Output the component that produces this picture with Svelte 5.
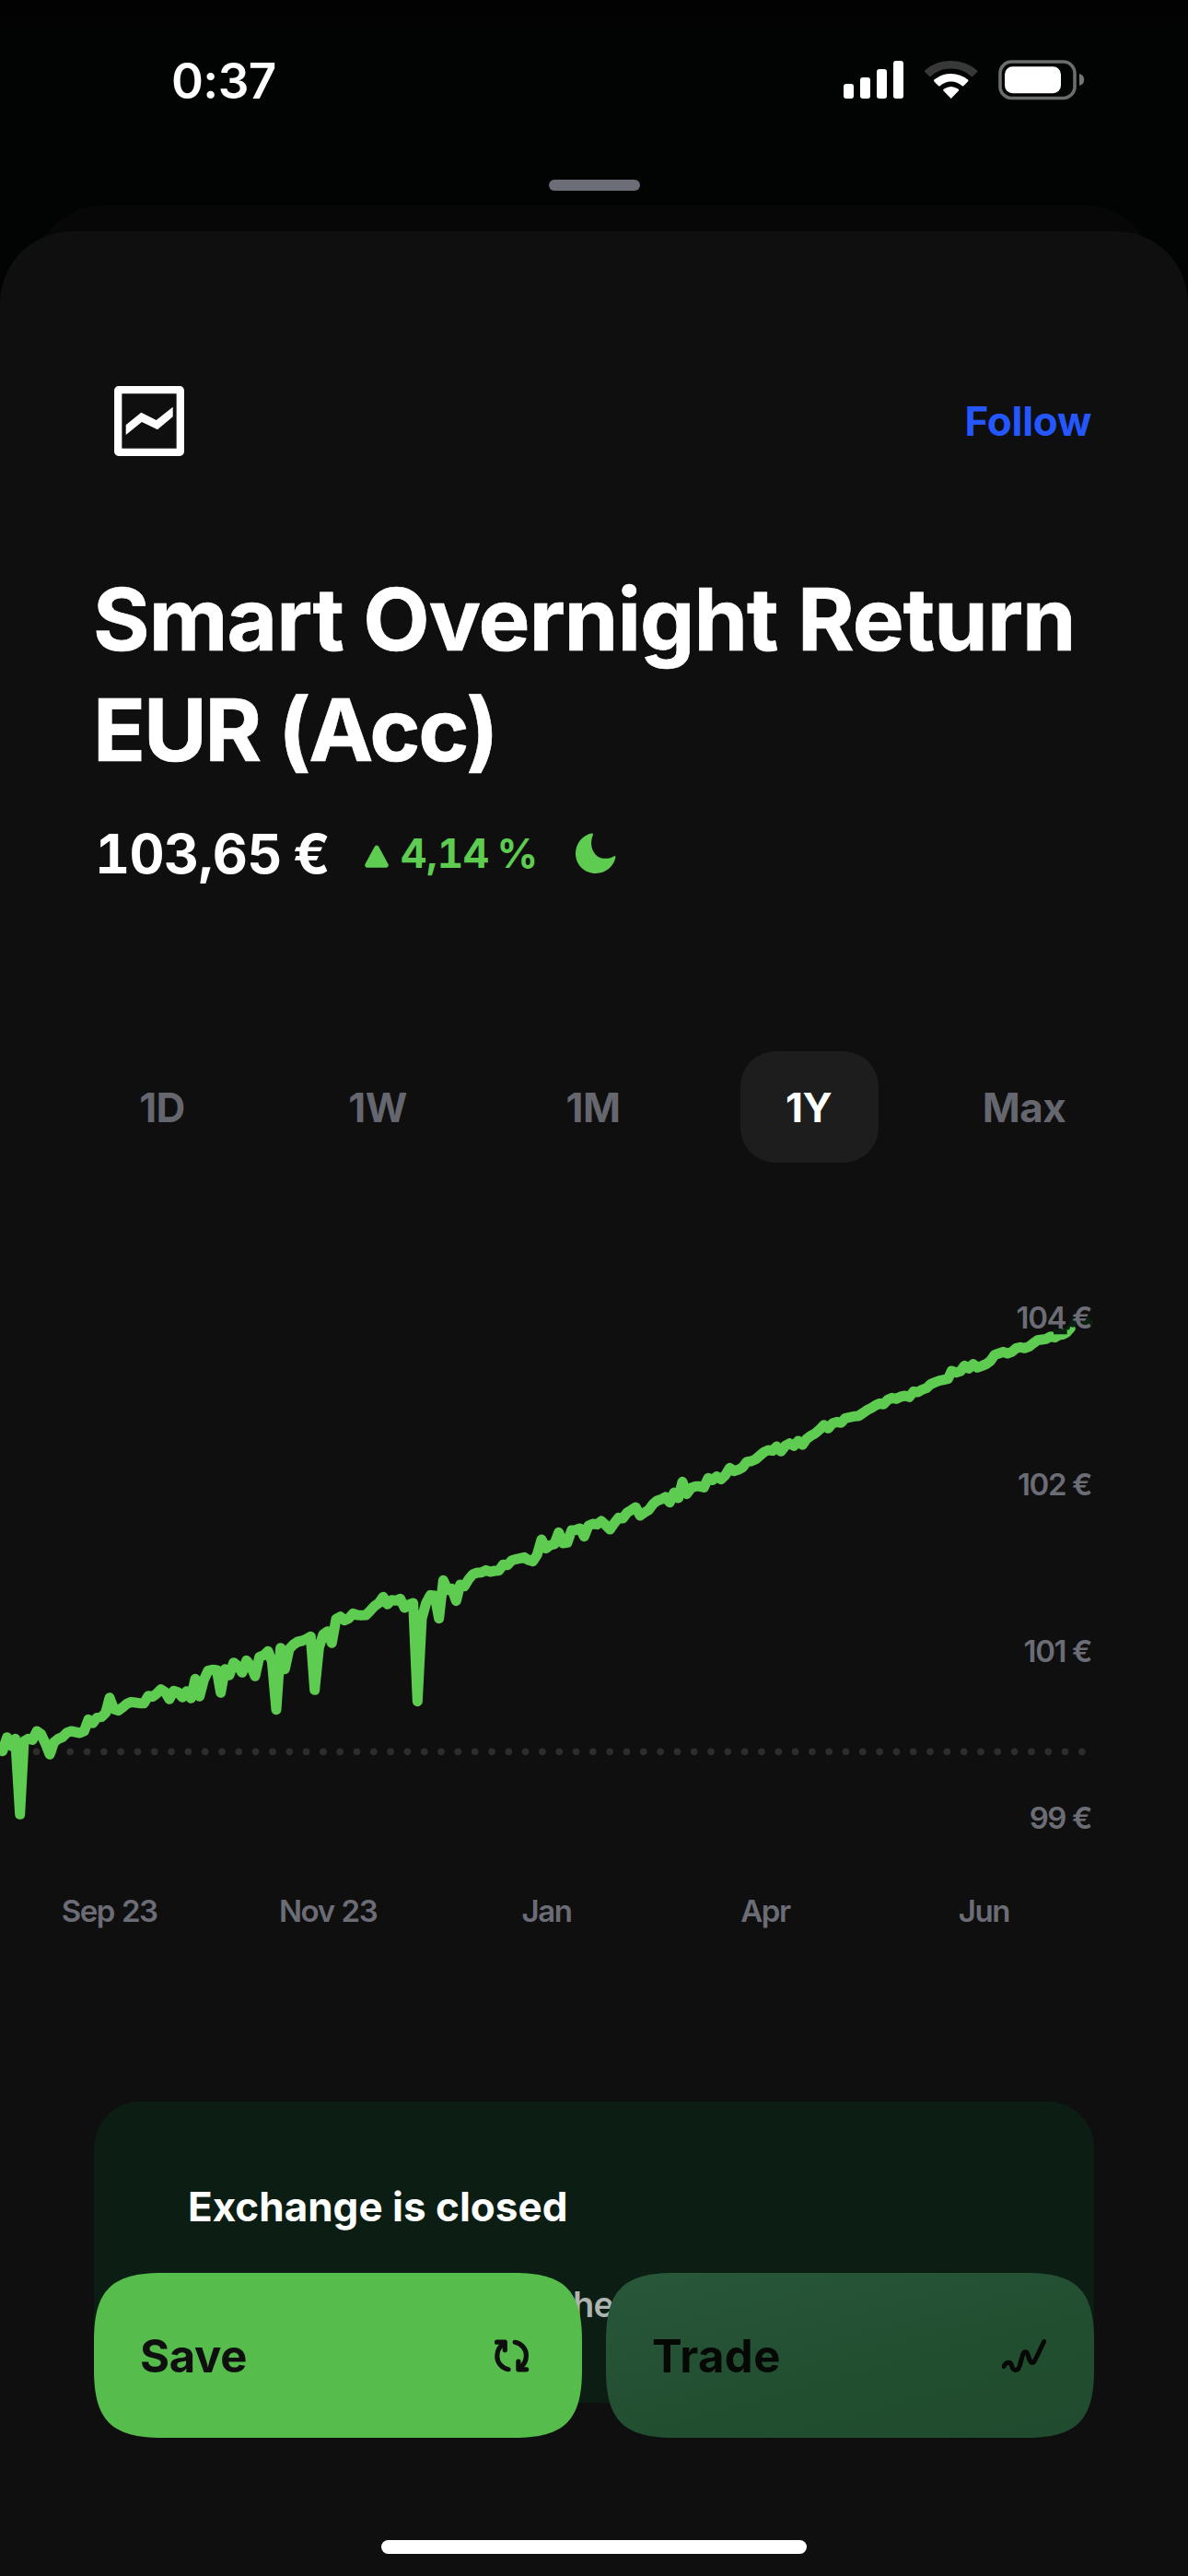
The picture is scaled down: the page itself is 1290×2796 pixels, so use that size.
<script lang="ts">
  const ranges = ['1D', '1W', '1M', '1Y', 'Max'];
  let selected = $state('1Y');

  const prices = ['104 €', '102 €', '101 €', '99 €'];
  const months = ['Sep 23', 'Nov 23', 'Jan', 'Apr', 'Jun'];

  // baseline dots, three chart units per pixel
  const dots = Array.from({ length: 65 }, (_, i) => 9 + i * 54.93);

  const line =
    '8,1562 23,1517 37,1545 50,1522 65,1768 78,1530 92,1522 106,1525 120,1497 134,1507 148,1537 162,1573 ' +
    '176,1533 190,1522 204,1516 218,1502 232,1497 246,1500 260,1503 274,1497 288,1459 302,1471 316,1453 ' +
    '330,1451 344,1438 357,1388 371,1425 385,1430 399,1420 413,1408 427,1402 441,1404 455,1406 469,1406 ' +
    '483,1382 497,1385 510,1375 524,1361 538,1370 552,1393 566,1366 580,1370 594,1387 608,1367 622,1390 ' +
    '636,1327 650,1384 664,1330 678,1300 692,1297 706,1298 719,1372 733,1295 747,1315 761,1274 775,1285 ' +
    '789,1306 803,1267 817,1285 831,1318 845,1255 859,1250 873,1237 886,1270 900,1427 914,1226 928,1295 ' +
    '942,1230 956,1215 970,1206 984,1203 998,1197 1012,1189 1025,1363 1039,1225 1053,1182 1067,1172 ' +
    '1081,1210 1095,1132 1109,1124 1122,1136 1136,1130 1150,1114 1164,1119 1178,1120 1192,1119 1206,1105 ' +
    '1220,1090 1234,1080 1248,1060 1262,1084 1276,1070 1290,1072 1304,1066 1318,1095 1332,1085 1346,1080 ' +
    '1360,1400 1374,1130 1388,1080 1402,1054 1416,1056 1430,1130 1444,1006 1458,1037 1472,1033 1486,1073 ' +
    '1499,1020 1513,1025 1527,1002 1541,986 1555,981 1569,980 1583,973 1597,978 1611,975 1625,974 ' +
    '1639,955 1653,956 1667,941 1681,937 1695,934 1708,931 1722,940 1736,944 1750,922 1764,873 1778,902 ' +
    '1792,892 1806,888 1820,850 1834,885 1848,883 1862,843 1875,842 1889,837 1903,863 1917,828 1931,822 ' +
    '1945,824 1959,813 1973,826 1987,840 2001,820 2015,802 2029,804 2043,785 2057,777 2071,768 2085,795 ' +
    '2099,785 2113,777 2127,758 2140,747 2154,742 2168,735 2182,752 2196,720 2210,738 2223,685 2237,725 ' +
    '2251,705 2265,700 2279,700 2293,703 2307,673 2321,679 2335,668 2349,677 2363,663 2377,640 2391,650 ' +
    '2405,646 2419,638 2433,620 2447,618 2461,612 2475,600 2489,588 2503,582 2517,584 2530,570 2544,586 ' +
    '2558,568 2572,560 2586,568 2600,552 2614,565 2628,545 2642,535 2656,527 2670,515 2684,500 2698,511 ' +
    '2712,495 2726,490 2740,493 2754,478 2768,475 2782,472 2796,471 2810,462 2824,452 2838,445 2852,436 ' +
    '2866,430 2878,433 2892,418 2906,412 2920,415 2934,408 2948,405 2962,409 2976,391 2990,393 3004,385 ' +
    '3018,380 3032,367 3046,361 3060,356 3074,353 3088,350 3100,324 3115,329 3129,325 3142,307 3156,316 ' +
    '3170,302 3184,313 3198,308 3212,302 3226,292 3240,272 3254,267 3268,262 3282,267 3296,262 3310,250 ' +
    '3324,247 3338,250 3352,245 3366,234 3380,224 3394,222 3408,220 3422,212 3436,215 3450,207 3464,204';
</script>

<div class="screen">
  <header class="status">
    <span class="time">0:37</span>
    <svg class="status-icons" viewBox="0 0 262 44" width="262" height="44">
      <g fill="#fff">
        <rect x="0" y="26" width="11" height="16" rx="3" />
        <rect x="18" y="19" width="11" height="23" rx="3" />
        <rect x="36" y="10" width="11" height="32" rx="3" />
        <rect x="54" y="1" width="11" height="41" rx="3" />
        <path d="M116.700 42 L108.200 33.300 Q108 32.300 109 31.600 Q116.700 26.200 124.400 31.600 Q125.400 32.300 125.200 33.300 Z" />
        <path d="M98.200 23.200 Q97.600 22.400 98.400 21.600 Q106.500 15 116.700 15 Q127 15 135 21.600 Q135.800 22.400 135.200 23.200 L130.300 28.300 Q129.600 28.900 128.800 28.300 Q123.500 23.500 116.700 23.500 Q110 23.500 104.600 28.300 Q103.800 28.900 103.100 28.300 Z" />
      </g>
      <path fill="#373837" d="M88.200 12.900 Q87.600 12.200 88.300 11.500 Q100 1 116.700 1 Q133.400 1 145.100 11.500 Q145.800 12.200 145.200 12.900 L140.200 17.900 Q139.500 18.500 138.800 17.900 Q129.500 9.500 116.700 9.500 Q104 9.500 94.600 17.900 Q93.900 18.500 93.200 17.900 Z" />
      <rect x="170" y="2" width="81" height="39.500" rx="12.500" fill="none" stroke="#6b6c6b" stroke-width="3.600" />
      <rect x="175" y="7.300" width="61" height="29" rx="8.500" fill="#fff" />
      <path fill="#737473" d="M256 15 q5.200 1.400 5.200 6.500 t-5.200 6.500 z" />
    </svg>
  </header>

  <div class="grabber"></div>
  <div class="sheet-behind"></div>

  <main class="sheet">
    <div class="top">
      <svg class="logo" viewBox="0 0 76 76" width="76" height="76">
        <rect x="4.200" y="4.200" width="67.600" height="67.600" rx="0.500" fill="none" stroke="#fff" stroke-width="8.300" />
        <path fill="#fff" d="M12.700 42.300 L29.300 28.700 L45.700 37 L63.700 22.700 V33.300 L47 47.300 L30 39 L12.700 53 Z" />
      </svg>
      <button class="follow">Follow</button>
    </div>

    <h1>Smart Overnight Return<br /><span>EUR (Acc)</span></h1>

    <div class="quote">
      <span class="price">103,65 €</span>
      <svg class="up" viewBox="0 0 26 26" width="26" height="26">
        <path d="M13 3.500 L23 22 H3 Z" fill="#5dcc50" stroke="#5dcc50" stroke-width="5.500" stroke-linejoin="round" />
      </svg>
      <span class="change">4,14 %</span>
      <svg class="moon" viewBox="0 0 44 44" width="44" height="44">
        <path fill="#5dcc50" d="M17.500 0.400 Q19.600 0.200 18.900 2.200 C14 14 19.500 27.500 32 27.800 C36 27.900 39 26.800 41.300 25.400 Q43.700 24.300 43.400 26.800 C41.500 36.500 32.500 44 22 44 C9.500 44 0 34.500 0 22.500 C0 11.500 7.500 2.200 17.500 0.400 Z" />
      </svg>
    </div>

    <nav class="ranges">
      {#each ranges as range}
        <button class:active={range === selected} onclick={() => (selected = range)}>{range}</button>
      {/each}
    </nav>

    <section class="chart">
      <svg viewBox="0 0 3870 1860" width="1290" height="620">
        {#each dots as x}
          <circle cx={x} cy="1564" r="11.500" fill="#2d2d2e" />
        {/each}
        <polyline points={line} fill="none" stroke="#5dcc50" stroke-width="33" stroke-linejoin="round" stroke-linecap="round" />
        <path d="M3464 210 L3478 203 L3492 187" fill="none" stroke="#5dcc50" stroke-width="22" stroke-linecap="round" stroke-linejoin="round" />
        <path d="M3432 188 H3464 L3484 172 L3492 152 L3505 148 V176 L3496 182 L3486 180 L3484 190 H3476 V205 H3432 Z" fill="#0b2013" />
        <circle cx="3543" cy="167" r="18" fill="#0b2013" />
      </svg>
      <div class="prices">
        {#each prices as label}
          <span>{label}</span>
        {/each}
      </div>
    </section>
    <div class="months">
      {#each months as month}
        <span>{month}</span>
      {/each}
    </div>

    <section class="notice">
      <h2>Exchange is closed</h2>
      <p>he</p>
    </section>
  </main>

  <footer class="actions">
    <div class="buttons">
      <button class="save">
        Save
        <svg viewBox="0 0 48 48" width="48" height="48" fill="none" stroke="#0f0f0f" stroke-width="5.200" stroke-linejoin="round">
          <path d="M7.500 9.200 H16.300 V17.800" stroke-linecap="round" />
          <path d="M15.500 10.500 C10.500 13.500 7.800 18.500 7.800 24.500 C7.800 31.500 13 37.500 20 38.700" stroke-linecap="round" />
          <path d="M39.700 38.800 H30.900 V30.200" stroke-linecap="round" />
          <path d="M31.700 37.500 C36.700 34.500 39.400 29.500 39.400 23.500 C39.400 16.500 34.200 10.500 27.200 9.300" stroke-linecap="round" />
        </svg>
      </button>
      <button class="trade">
        Trade
        <svg viewBox="0 0 48 48" width="48" height="48" fill="none" stroke="#050805" stroke-width="5" stroke-linejoin="round" stroke-linecap="round">
          <path d="M2 35.500 C4 31 9 29.500 10.500 34.500 C12 41 17 41 19 35.500 L22.500 23 C23.800 18.500 27 18.500 28.200 23 C29.800 29.500 32.500 34.500 35.500 29.500 L45.700 8.500" />
        </svg>
      </button>
    </div>
    <div class="home"></div>
  </footer>
</div>

<style>
  :global(body) {
    margin: 0;
    background: #030303;
  }

  .screen {
    position: relative;
    display: flex;
    flex-direction: column;
    width: 1290px;
    height: 2796px;
    overflow: hidden;
    background: linear-gradient(#020202, #020403 60px, #020303 250px);
    color: #fff;
    font-family: Inter, 'Liberation Sans', sans-serif;
  }

  button {
    border: 0;
    padding: 0;
    background: none;
    color: inherit;
    font: inherit;
  }

  .status {
    display: flex;
    justify-content: space-between;
    align-items: center;
    height: 66px;
    padding: 55px 112px 0 186px;
  }

  .time {
    font-size: 53px;
    font-weight: 600;
    letter-spacing: -0.6px;
  }

  .status-icons {
    margin-top: -2px;
  }

  .grabber {
    width: 99px;
    height: 12px;
    margin: 74px auto 16px;
    border-radius: 6px;
    background: #6b6d77;
  }

  .sheet-behind {
    flex: none;
    height: 100px;
    margin: 0 36px -72px;
    border-radius: 76px 76px 0 0;
    background: #070707;
  }

  .sheet {
    position: relative;
    flex: 1;
    padding: 168px 102px 0;
    border-radius: 78px 78px 0 0;
    background: #0f0f0f;
  }

  .top {
    display: flex;
    justify-content: space-between;
    align-items: center;
    height: 76px;
    padding: 0 3px 0 22px;
  }

  .follow {
    color: #2457ff;
    font-size: 44px;
    font-weight: 700;
    letter-spacing: -0.3px;
  }

  h1 {
    margin: 117px 0 44px -1px;
    font-size: 94px;
    font-weight: 700;
    line-height: 120px;
    letter-spacing: -0.9px;
    white-space: nowrap;
    -webkit-text-stroke: 0.7px #fff;
  }

  h1 span {
    letter-spacing: -2.2px;
  }

  .quote {
    display: flex;
    align-items: center;
    height: 60px;
    font-variant-numeric: tabular-nums;
    white-space: nowrap;
  }

  .price {
    width: 293px;
    margin-left: 1px;
    font-size: 59px;
    font-weight: 700;
    letter-spacing: -0.6px;
    word-spacing: -3px;
  }

  .up {
    margin-top: 7px;
  }

  .change {
    width: 190px;
    margin-left: 13px;
    color: #5dcc50;
    font-size: 44px;
    font-weight: 700;
    letter-spacing: -0.3px;
    word-spacing: -3px;
  }

  .ranges {
    display: flex;
    justify-content: space-between;
    margin-top: 185px;
  }

  .ranges button {
    width: 150px;
    height: 121px;
    padding-right: 2px;
    border-radius: 38px;
    color: #65666e;
    font-size: 44px;
    font-weight: 700;
    letter-spacing: -0.6px;
  }

  .ranges .active {
    background: #1d1d1d;
    color: #fff;
  }

  .chart {
    position: relative;
    height: 620px;
    margin: 118px -102px 0;
  }

  .chart svg {
    display: block;
  }

  .prices {
    position: absolute;
    top: 30px;
    right: 105px;
    display: flex;
    flex-direction: column;
    justify-content: space-between;
    align-items: flex-end;
    height: 583px;
  }

  .prices,
  .months {
    color: #6b6c75;
    font-size: 33px;
    font-weight: 600;
    line-height: 40px;
    letter-spacing: -1.4px;
  }

  .months {
    display: flex;
    margin: 54px 1px 187px -102px;
    word-spacing: 1px;
  }

  .months span {
    flex: 1;
    text-align: center;
  }

  .notice {
    box-sizing: border-box;
    height: 327px;
    padding: 86px 102px 0;
    border-radius: 50px;
    background: #0c1d13;
  }

  h2 {
    margin: 0;
    font-size: 44px;
    font-weight: 700;
    line-height: 56px;
  }

  p {
    margin: 53px 0 0 418px;
    color: #aeb4b0;
    font-size: 38px;
    font-weight: 600;
    line-height: 50px;
    letter-spacing: -0.8px;
  }

  .actions {
    position: absolute;
    right: 0;
    bottom: 24px;
    left: 0;
    padding: 0 102px;
  }

  .buttons {
    display: flex;
    justify-content: space-between;
  }

  .buttons button {
    display: flex;
    justify-content: space-between;
    align-items: center;
    width: 530px;
    height: 179px;
    padding: 1px 52px 0 50px;
    font-size: 49px;
    font-weight: 700;
    letter-spacing: -0.3px;
    clip-path: path('M0 74 C0 19 19 0 74 0 H456 C511 0 530 19 530 74 V105 C530 160 511 179 456 179 H74 C19 179 0 160 0 105 Z');
  }

  .save {
    background: #56bd4c;
    color: #0f0f0f;
  }

  .buttons .trade {
    background: linear-gradient(165deg, #285739, #224e30 60%, #204b2e);
    color: #050805;
    letter-spacing: 0.4px;
  }

  .home {
    width: 462px;
    height: 15px;
    margin: 111px auto 0;
    border-radius: 8px;
    background: #fff;
  }
</style>
